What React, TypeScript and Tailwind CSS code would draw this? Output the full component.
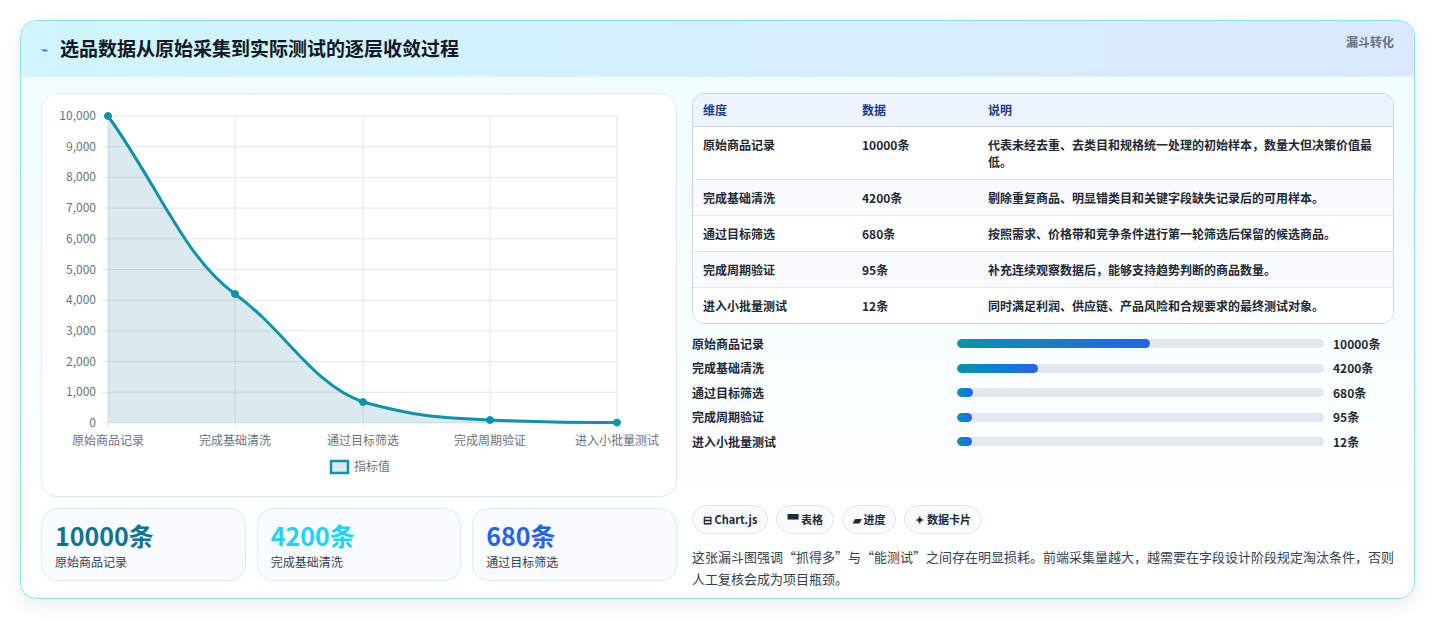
const rows = [
  { k: "原始商品记录", v: "10000条", d: "代表未经去重、去类目和规格统一处理的初始样本，数量大但决策价值最低。" },
  { k: "完成基础清洗", v: "4200条", d: "剔除重复商品、明显错类目和关键字段缺失记录后的可用样本。" },
  { k: "通过目标筛选", v: "680条", d: "按照需求、价格带和竞争条件进行第一轮筛选后保留的候选商品。" },
  { k: "完成周期验证", v: "95条", d: "补充连续观察数据后，能够支持趋势判断的商品数量。" },
  { k: "进入小批量测试", v: "12条", d: "同时满足利润、供应链、产品风险和合规要求的最终测试对象。" },
];
const bars = [
  { k: "原始商品记录", v: "10000条", w: 52.5 },
  { k: "完成基础清洗", v: "4200条", w: 22 },
  { k: "通过目标筛选", v: "680条", w: 4.4 },
  { k: "完成周期验证", v: "95条", w: 4.2 },
  { k: "进入小批量测试", v: "12条", w: 4.2 },
];
const yTicks = ["10,000", "9,000", "8,000", "7,000", "6,000", "5,000", "4,000", "3,000", "2,000", "1,000", "0"];
const xs = [66, 193, 321, 448, 575];
const pts = [[66, 22], [193, 200], [321, 308], [448, 326], [575, 328.6]];
const curve = "M66,22 C117,93 142,163 193,200 C244,237 270,290 321,308 C372,322 397,324 448,326 C499,328 524,328.6 575,328.6";

function Chart() {
  return (
    <svg width="636" height="400" className="block">
      {yTicks.map((t, i) => {
        const y = 22 + i * 30.7;
        return (
          <g key={t}>
            <line x1="60" x2="575" y1={y} y2={y} stroke="#e5e7eb" />
            <text x="54" y={y + 4} textAnchor="end" fontSize="12" fill="#6b7280">{t}</text>
          </g>
        );
      })}
      {xs.map((x) => <line key={x} x1={x} x2={x} y1="22" y2="335" stroke="#e5e7eb" />)}
      <path d={curve + " L575,329 L66,329 Z"} fill="rgba(14,116,144,0.15)" />
      <path d={curve} fill="none" stroke="#0e93aa" strokeWidth="3" />
      {pts.map(([x, y]) => <circle key={x} cx={x} cy={y} r="3.5" fill="#0e93aa" stroke="#0e93aa" />)}
      {["原始商品记录", "完成基础清洗", "通过目标筛选", "完成周期验证", "进入小批量测试"].map((l, i) => (
        <text key={l} x={xs[i]} y="351" textAnchor="middle" fontSize="12" fill="#6b7280">{l}</text>
      ))}
      <rect x="289" y="367" width="17" height="12" fill="rgba(14,116,144,0.15)" stroke="#0e93aa" strokeWidth="2.5" />
      <text x="312" y="377" fontSize="12" fill="#6b7280">指标值</text>
    </svg>
  );
}

export default function App() {
  return (
    <div className="w-[1435px] h-[621px] bg-white p-5" style={{ fontFamily: '"Noto Sans CJK SC", "Liberation Sans", sans-serif' }}>
      <div className="rounded-2xl border border-[#8fdfee] overflow-hidden shadow-[0_6px_20px_rgba(0,0,0,0.08)] bg-gradient-to-b from-[#effdff] to-white h-[579px]">
        <div className="h-[56px] flex items-center justify-between px-5 bg-gradient-to-r from-[#cff6fc] to-[#dae9fd] border-b border-[#e0f4f8]">
          <div className="flex items-center gap-3">
            <span className="text-[#2563eb] text-xs">⌁</span>
            <h1 className="text-[19px] font-bold text-[#111827]">选品数据从原始采集到实际测试的逐层收敛过程</h1>
          </div>
          <span className="text-[12px] font-bold text-[#6b7280] self-start mt-3">漏斗转化</span>
        </div>
        <div className="flex gap-[15px] px-5 pt-4">
          <div className="w-[636px] flex flex-col gap-[11px]">
            <div className="h-[404px] rounded-2xl border border-[#e2e8f0] bg-white">
              <Chart />
            </div>
            <div className="grid grid-cols-3 gap-[11px]">
              {[["10000条", "原始商品记录", "text-[#0e7490]"], ["4200条", "完成基础清洗", "text-[#22d3ee]"], ["680条", "通过目标筛选", "text-[#2563eb]"]].map(([v, l, c]) => (
                <div key={l} className="h-[73px] rounded-2xl border border-[#dbeafe] bg-[#f8fbff] px-[13px] pt-[10px]">
                  <div className={`text-[25px] font-bold leading-[32px] ${c}`}>{v}</div>
                  <div className="text-[12px] text-[#374151] mt-[2px]">{l}</div>
                </div>
              ))}
            </div>
          </div>
          <div className="flex-1">
            <div className="rounded-xl border border-[#cbd5e1] overflow-hidden text-[12px]">
              <div className="flex h-[33px] items-center bg-[#eef4ff] text-[#1e3a8a] font-bold border-b border-[#cbd5e1]">
                <div className="w-[169px] pl-[10px]">维度</div>
                <div className="w-[126px]">数据</div>
                <div className="flex-1">说明</div>
              </div>
              {rows.map((r, i) => (
                <div key={r.k} className={`flex items-start py-[9px] text-[#1f2937] ${i % 2 ? "bg-[#f8fafc]" : "bg-white"} ${i < 4 ? "border-b border-[#e2e8f0]" : ""}`}>
                  <div className="w-[169px] pl-[10px] font-semibold leading-[17px]">{r.k}</div>
                  <div className="w-[126px] font-semibold leading-[17px]">{r.v}</div>
                  <div className="flex-1 pr-3 font-semibold leading-[17px]">{r.d}</div>
                </div>
              ))}
            </div>
            <div className="mt-[11px] flex flex-col gap-[7px]">
              {bars.map((b) => (
                <div key={b.k} className="flex items-center h-[17.5px] text-[12px] font-semibold text-[#1f2937]">
                  <div className="w-[265px]">{b.k}</div>
                  <div className="w-[367px] h-[9px] rounded-full bg-[#e2e8f0] overflow-hidden">
                    <div className="h-full rounded-full bg-gradient-to-r from-[#0e93aa] to-[#2563eb]" style={{ width: `${b.w}%` }} />
                  </div>
                  <div className="pl-[9px] font-bold">{b.v}</div>
                </div>
              ))}
            </div>
            <div className="mt-[54px] flex gap-[8px]">
              {["⊟ Chart.js", "▀ 表格", "▰ 进度", "✦ 数据卡片"].map((c) => (
                <span key={c} className="h-[29px] px-[10px] flex items-center rounded-full border border-[#e2e8f0] bg-[#f8fafc] text-[11px] font-bold text-[#1f2937]">{c}</span>
              ))}
            </div>
            <p className="mt-[12px] text-[13px] leading-[22px] text-[#374151]">
              这张漏斗图强调“抓得多”与“能测试”之间存在明显损耗。前端采集量越大，越需要在字段设计阶段规定淘汰条件，否则人工复核会成为项目瓶颈。
            </p>
          </div>
        </div>
      </div>
    </div>
  );
}
